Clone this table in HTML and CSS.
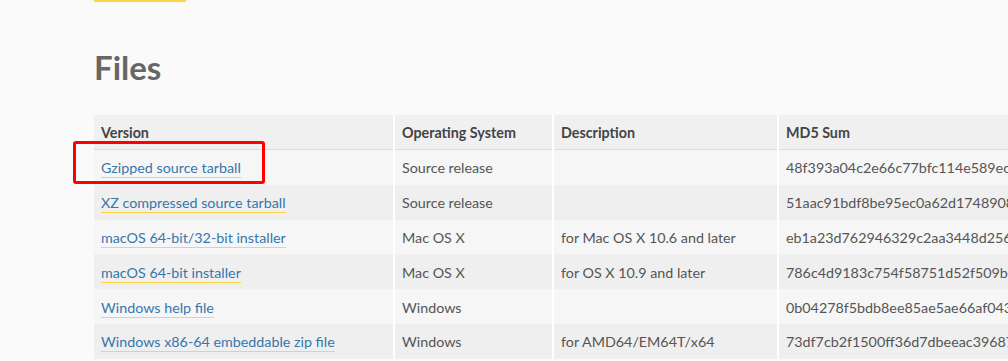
FILE: index.html
```html
<!DOCTYPE html>
<html>
<head>
<meta charset="utf-8">
<link rel="stylesheet" href="styles.css">
</head>
<body>
<div class="page">
  <div class="topline"></div>
  <h2 class="title">Files</h2>
  <table class="files">
    <thead>
      <tr>
        <th class="c-ver">Version</th>
        <th class="c-os">Operating System</th>
        <th class="c-desc">Description</th>
        <th class="c-md5">MD5 Sum</th>
      </tr>
    </thead>
    <tbody>
      <tr><td><a href="#">Gzipped source tarball</a></td><td>Source release</td><td></td><td>48f393a04c2e66c77bfc114e589ec630</td></tr>
      <tr><td><a href="#">XZ compressed source tarball</a></td><td>Source release</td><td></td><td>51aac91bdf8be95ec0a62d174890821a</td></tr>
      <tr><td><a href="#">macOS 64-bit/32-bit installer</a></td><td>Mac OS X</td><td>for Mac OS X 10.6 and later</td><td>eb1a23d762946329c2aa3448d256d421</td></tr>
      <tr><td><a href="#">macOS 64-bit installer</a></td><td>Mac OS X</td><td>for OS X 10.9 and later</td><td>786c4d9183c754f58751d52f509bc971</td></tr>
      <tr><td><a href="#">Windows help file</a></td><td>Windows</td><td></td><td>0b04278f5bdb8ee85ae5ae66af043053</td></tr>
      <tr><td><a href="#">Windows x86-64 embeddable zip file</a></td><td>Windows</td><td>for AMD64/EM64T/x64</td><td>73df7cb2f1500ff36d7dbeeac3968711</td></tr>
    </tbody>
  </table>
  <div class="mark"></div>
</div>
</body>
</html>
```
FILE: styles.css
```css
html, body {
  margin: 0;
  padding: 0;
  background: #fafafa;
  overflow: hidden;
}
.page {
  position: relative;
  padding-left: 94px;
  font-family: Lato, "Liberation Sans", sans-serif;
  width: 1200px;
}
.topline {
  width: 92px;
  height: 2px;
  background: #ffd343;
}
.title {
  margin: 45px 0 0 0;
  font-size: 33px;
  line-height: 40px;
  font-weight: 700;
  color: #666;
}
.files {
  margin-top: 28px;
  border-collapse: collapse;
  font-size: 14.3px;
  color: #555;
}
.files th {
  background: #f0f0f0;
  color: #444;
  font-weight: 700;
  text-align: left;
  height: 34px;
  padding: 0 7px;
  border-bottom: 1px solid #dcdcdc;
  border-right: 2px solid #fff;
}
.files td {
  height: 33.8px;
  padding: 1px 7px 0;
  border-right: 2px solid #fff;
  white-space: nowrap;
}
.files tbody tr:nth-child(odd) td { background: #f6f6f6; }
.files tbody tr:nth-child(even) td { background: #efefef; }
.c-ver { width: 285px; }
.c-os { width: 143px; }
.c-desc { width: 209px; }
.c-md5 { width: 400px; }
.files a {
  color: #3776ab;
  text-decoration: none;
  border-bottom: 1px solid #ffd343;
  padding-bottom: 1px;
}
.mark {
  position: absolute;
  left: 73px;
  top: 141px;
  width: 186px;
  height: 37px;
  border: 3px solid #f00;
  border-radius: 3px;
}
```
